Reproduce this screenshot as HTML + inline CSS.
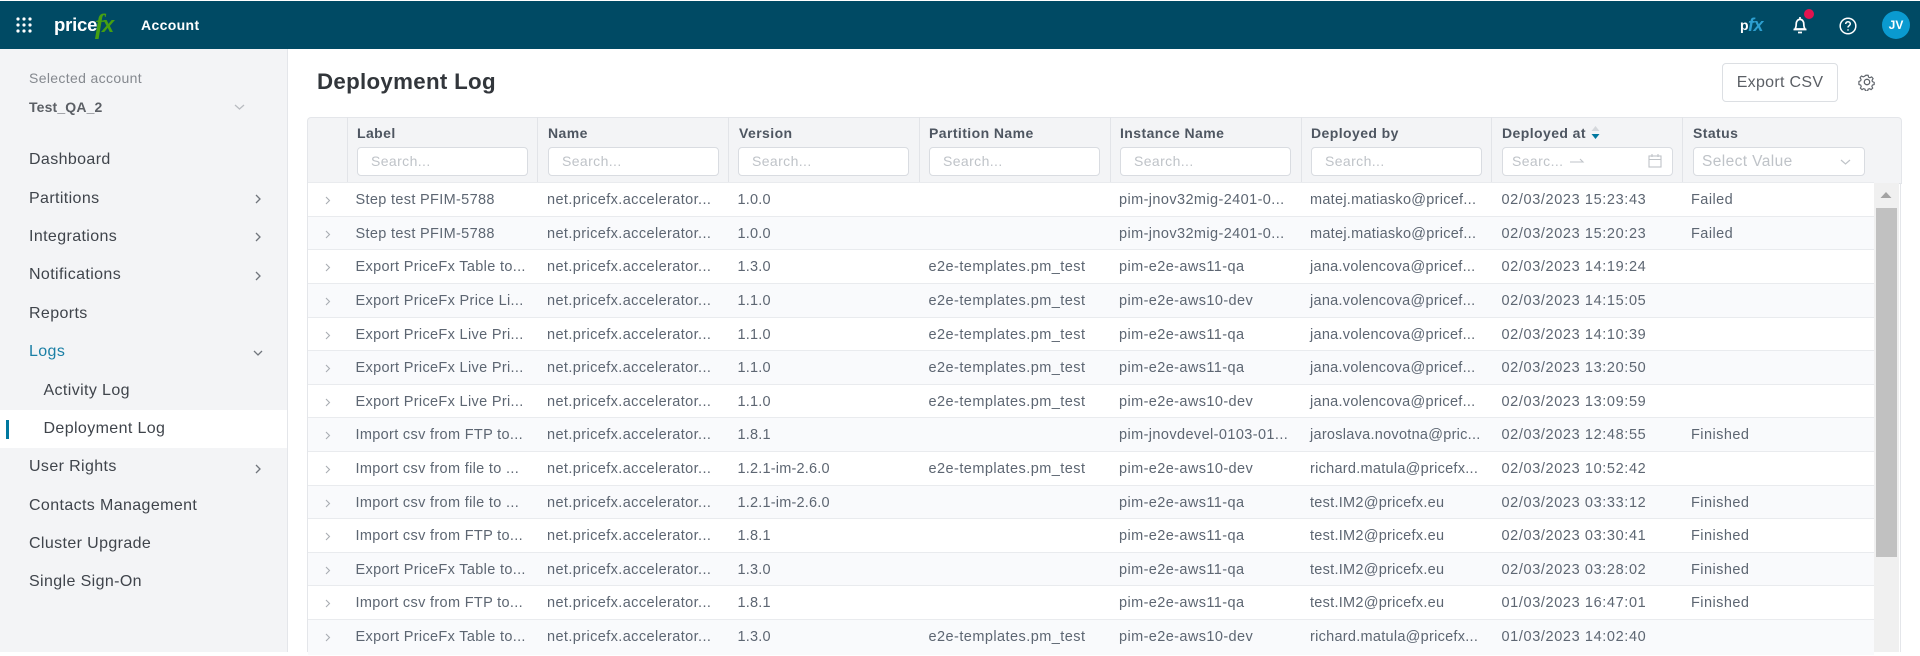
<!DOCTYPE html>
<html><head><meta charset="utf-8"><style>
html,body{margin:0;padding:0;width:1920px;height:652px;overflow:hidden;background:#fff;font-family:"Liberation Sans",sans-serif}
div,span,svg{position:absolute}
span{white-space:nowrap}
#top{left:0;top:1px;width:1920px;height:48px;background:#004a64}
#side{left:0;top:49px;width:287px;height:603px;background:#f3f4f6;border-right:1px solid #e4e6ea}
.n{left:29px;font-size:16px;letter-spacing:.38px;color:#3f444b;line-height:20px}
.s{left:43.500px}
.ch{left:253px;width:10px;height:10px}
.hd{left:307px;top:117px;width:1593px;height:65px;background:#f3f4f6;border:1px solid #e4e6ea;border-bottom:1px solid #dfe2e6;box-sizing:content-box;border-radius:4px 4px 0 0}
.v{top:117px;width:1px;height:65px;background:#e2e4e8}
.hl{top:124px;font-size:14px;font-weight:bold;letter-spacing:.42px;color:#4e5661;line-height:18px}
.in{top:147px;height:27px;background:#fff;border:1px solid #d9dce1;border-radius:4px;width:169px;color:#bfc3c8;font-size:14px;letter-spacing:.4px;line-height:27px;text-indent:13px}
.r{left:308px;width:1566px;height:36px;box-sizing:border-box;border-top:1px solid #e9ebee;background:#fff;color:#5d6672;font-size:14.500px;letter-spacing:.45px;line-height:35.500px}
.r.e{background:#f9fafc}
.r span{top:0}
.a{left:47.500px;letter-spacing:.33px}.b{left:239px;letter-spacing:.4px}.c{left:429.500px;letter-spacing:.2px}.d{left:620.500px}.f{left:811px;letter-spacing:.4px}.g{left:1002px;letter-spacing:.27px}.h{left:1193.500px;letter-spacing:.62px}.j{left:1383px}
.r svg{left:16px;top:13px;width:8px;height:9px}
</style></head><body>
<div id="top"></div>
<svg style="left:16px;top:17px" width="16" height="16" viewBox="0 0 16 16" fill="#fff"><circle cx="2" cy="2" r="1.600"/><circle cx="8" cy="2" r="1.600"/><circle cx="14" cy="2" r="1.600"/><circle cx="2" cy="8" r="1.600"/><circle cx="8" cy="8" r="1.600"/><circle cx="14" cy="8" r="1.600"/><circle cx="2" cy="14" r="1.600"/><circle cx="8" cy="14" r="1.600"/><circle cx="14" cy="14" r="1.600"/></svg>
<span style="left:54px;top:13px;font-size:18.500px;font-weight:bold;color:#fff;line-height:24px;letter-spacing:-.2px">price</span>
<span style="left:95px;top:10px;font-family:'Liberation Serif',serif;font-size:27px;font-weight:bold;font-style:italic;color:#46a012;line-height:28px">f</span>
<span style="left:102px;top:13px;font-size:22px;font-weight:bold;font-style:italic;color:#46a012;line-height:24px">x</span>
<span style="left:141px;top:16px;font-size:14px;font-weight:bold;color:#fff;line-height:18px;letter-spacing:.35px">Account</span>
<span style="left:1740px;top:16px;font-size:14px;font-weight:bold;color:#fff;line-height:18px">p</span>
<span style="left:1748px;top:13px;font-size:18px;font-weight:bold;font-style:italic;color:#2d9fd0;line-height:24px;letter-spacing:-.5px">fx</span>
<svg style="left:1792px;top:16px" width="16" height="18" viewBox="0 0 16 18" fill="none" stroke="#fff" stroke-width="1.700"><path d="M3 13c.9-1.300 1.200-2.300 1.200-5 0-2.700 1.600-4.600 3.800-4.600s3.800 1.900 3.800 4.600c0 2.700.3 3.700 1.200 5z" stroke-linejoin="round"/><path d="M1.500 13.500h13M6 16.500h4M8 1v2.500"/></svg>
<div style="left:1804px;top:9px;width:10px;height:10px;border-radius:50%;background:#e2134f"></div>
<svg style="left:1839px;top:17px" width="18" height="18" viewBox="0 0 18 18" fill="none" stroke="#fff" stroke-width="1.500"><circle cx="9" cy="9" r="7.800"/><path d="M6.700 7c0-1.400 1-2.300 2.300-2.300s2.300.9 2.300 2.200c0 1.800-2.300 1.800-2.300 3.600"/><path d="M9 12.300v1.300"/></svg>
<div style="left:1882px;top:11px;width:28px;height:28px;border-radius:50%;background:#0a9ad0;color:#fff;font-size:12px;font-weight:bold;line-height:28px;text-align:center">JV</div>

<div id="side"></div>
<span style="left:29px;top:69px;font-size:14px;letter-spacing:.35px;color:#85898f;line-height:18px">Selected account</span>
<span style="left:29px;top:98px;font-size:14px;font-weight:bold;letter-spacing:.15px;color:#5b5f65;line-height:18px">Test_QA_2</span>
<svg style="left:234px;top:103px" width="11" height="8" viewBox="0 0 11 8" fill="none" stroke="#b9bcc1" stroke-width="1.300"><path d="M1 2l4.500 4L10 2"/></svg>
<span class="n" style="top:150px">Dashboard</span>
<span class="n" style="top:189px">Partitions</span>
<span class="n" style="top:227px">Integrations</span>
<span class="n" style="top:265px">Notifications</span>
<span class="n" style="top:304px">Reports</span>
<span class="n" style="top:342px;color:#1a7fa5">Logs</span>
<span class="n s" style="top:381px">Activity Log</span>
<div style="left:0;top:410px;width:287px;height:38px;background:#fff"></div>
<div style="left:6px;top:420px;width:3px;height:19px;background:#00789f"></div>
<span class="n s" style="top:419px">Deployment Log</span>
<span class="n" style="top:457px">User Rights</span>
<span class="n" style="top:496px">Contacts Management</span>
<span class="n" style="top:534px">Cluster Upgrade</span>
<span class="n" style="top:572px">Single Sign-On</span>
<svg class="ch" style="top:194px" viewBox="0 0 10 10" fill="none" stroke="#70757c" stroke-width="1.300"><path d="M3 1l4 4-4 4"/></svg>
<svg class="ch" style="top:232px" viewBox="0 0 10 10" fill="none" stroke="#70757c" stroke-width="1.300"><path d="M3 1l4 4-4 4"/></svg>
<svg class="ch" style="top:271px" viewBox="0 0 10 10" fill="none" stroke="#70757c" stroke-width="1.300"><path d="M3 1l4 4-4 4"/></svg>
<svg class="ch" style="top:348px" viewBox="0 0 10 10" fill="none" stroke="#70757c" stroke-width="1.300"><path d="M1 3l4 4 4-4"/></svg>
<svg class="ch" style="top:464px" viewBox="0 0 10 10" fill="none" stroke="#70757c" stroke-width="1.300"><path d="M3 1l4 4-4 4"/></svg>

<span style="left:317px;top:67px;font-size:22.300px;font-weight:bold;color:#32363b;line-height:30px;letter-spacing:.3px">Deployment Log</span>
<div style="left:1722px;top:63px;width:114px;height:37px;border:1px solid #dcdfe3;border-radius:4px;background:#fff;color:#5b5f65;font-size:16px;line-height:37px;text-align:center;letter-spacing:.3px">Export CSV</div>
<svg style="left:1858px;top:73px" width="18" height="18" viewBox="0 0 18 18" fill="none" stroke="#5f646b" stroke-width="1.300"><circle cx="9" cy="9" r="2.700"/><path d="M7.700 1.500h2.600l.4 2.100 1.500.7 1.900-1 1.700 2-1.200 1.700.4 1.600 2 .8v2.400l-2 .6-.6 1.600 1 1.800-1.900 1.700-1.700-1.100-1.600.6-.5 2h-2.400l-.5-2-1.600-.6-1.700 1.100-1.900-1.700 1-1.800-.6-1.600-2-.6V8.400l2-.8.4-1.600-1.200-1.700 1.700-2 1.900 1 1.500-.7z" transform="translate(.9 .9) scale(.9)" stroke-linejoin="round"/></svg>

<div class="hd"></div>
<div class="v" style="left:347px"></div><div class="v" style="left:537px"></div><div class="v" style="left:728px"></div><div class="v" style="left:919px"></div><div class="v" style="left:1110px"></div><div class="v" style="left:1301px"></div><div class="v" style="left:1491px"></div><div class="v" style="left:1682px"></div>
<span class="hl" style="left:357px">Label</span><span class="hl" style="left:548px">Name</span><span class="hl" style="left:739px">Version</span><span class="hl" style="left:929px">Partition Name</span><span class="hl" style="left:1120px">Instance Name</span><span class="hl" style="left:1311px">Deployed by</span><span class="hl" style="left:1502px">Deployed at</span><span class="hl" style="left:1693px">Status</span>
<svg style="left:1591px;top:125px" width="9" height="16" viewBox="0 0 9 16"><path d="M4.500 1L8.500 6H.5z" fill="#d5d8dc"/><path d="M4.500 14L8.500 9H.5z" fill="#00789f"/></svg>
<div class="in" style="left:357px">Search...</div><div class="in" style="left:548px">Search...</div><div class="in" style="left:738px">Search...</div><div class="in" style="left:929px">Search...</div><div class="in" style="left:1120px">Search...</div><div class="in" style="left:1311px">Search...</div>
<div class="in" style="left:1502px;text-indent:9px">Searc...</div>
<svg style="left:1570px;top:156px" width="15" height="10" viewBox="0 0 15 10" fill="none" stroke="#bfc3c8" stroke-width="1.100"><path d="M0 6h13l-3-3"/></svg>
<svg style="left:1648px;top:154px" width="14" height="14" viewBox="0 0 14 14" fill="none" stroke="#bfc3c8" stroke-width="1.100"><rect x="1" y="2" width="12" height="11"/><path d="M1 5.500h12M4 0v3M10 0v3"/></svg>
<div class="in" style="left:1693px;width:170px;text-indent:8px;font-size:15.500px">Select Value</div>
<svg style="left:1840px;top:158px" width="11" height="8" viewBox="0 0 11 8" fill="none" stroke="#bfc3c8" stroke-width="1.200"><path d="M1 2l4.500 4L10 2"/></svg>

<div class="r" style="top:182px"><svg viewBox="0 0 8 9" fill="none" stroke="#a9adb3" stroke-width="1.100"><path d="M2 1l3.500 3.500L2 8"/></svg><span class="a">Step test PFIM-5788</span><span class="b">net.pricefx.accelerator...</span><span class="c">1.0.0</span><span class="f">pim-jnov32mig-2401-0...</span><span class="g">matej.matiasko@pricef...</span><span class="h">02/03/2023 15:23:43</span><span class="j">Failed</span></div>
<div class="r e" style="top:216px"><svg viewBox="0 0 8 9" fill="none" stroke="#a9adb3" stroke-width="1.100"><path d="M2 1l3.500 3.500L2 8"/></svg><span class="a">Step test PFIM-5788</span><span class="b">net.pricefx.accelerator...</span><span class="c">1.0.0</span><span class="f">pim-jnov32mig-2401-0...</span><span class="g">matej.matiasko@pricef...</span><span class="h">02/03/2023 15:20:23</span><span class="j">Failed</span></div>
<div class="r" style="top:249px"><svg viewBox="0 0 8 9" fill="none" stroke="#a9adb3" stroke-width="1.100"><path d="M2 1l3.500 3.500L2 8"/></svg><span class="a">Export PriceFx Table to...</span><span class="b">net.pricefx.accelerator...</span><span class="c">1.3.0</span><span class="d">e2e-templates.pm_test</span><span class="f">pim-e2e-aws11-qa</span><span class="g">jana.volencova@pricef...</span><span class="h">02/03/2023 14:19:24</span></div>
<div class="r e" style="top:283px"><svg viewBox="0 0 8 9" fill="none" stroke="#a9adb3" stroke-width="1.100"><path d="M2 1l3.500 3.500L2 8"/></svg><span class="a">Export PriceFx Price Li...</span><span class="b">net.pricefx.accelerator...</span><span class="c">1.1.0</span><span class="d">e2e-templates.pm_test</span><span class="f">pim-e2e-aws10-dev</span><span class="g">jana.volencova@pricef...</span><span class="h">02/03/2023 14:15:05</span></div>
<div class="r" style="top:317px"><svg viewBox="0 0 8 9" fill="none" stroke="#a9adb3" stroke-width="1.100"><path d="M2 1l3.500 3.500L2 8"/></svg><span class="a">Export PriceFx Live Pri...</span><span class="b">net.pricefx.accelerator...</span><span class="c">1.1.0</span><span class="d">e2e-templates.pm_test</span><span class="f">pim-e2e-aws11-qa</span><span class="g">jana.volencova@pricef...</span><span class="h">02/03/2023 14:10:39</span></div>
<div class="r e" style="top:350px"><svg viewBox="0 0 8 9" fill="none" stroke="#a9adb3" stroke-width="1.100"><path d="M2 1l3.500 3.500L2 8"/></svg><span class="a">Export PriceFx Live Pri...</span><span class="b">net.pricefx.accelerator...</span><span class="c">1.1.0</span><span class="d">e2e-templates.pm_test</span><span class="f">pim-e2e-aws11-qa</span><span class="g">jana.volencova@pricef...</span><span class="h">02/03/2023 13:20:50</span></div>
<div class="r" style="top:384px"><svg viewBox="0 0 8 9" fill="none" stroke="#a9adb3" stroke-width="1.100"><path d="M2 1l3.500 3.500L2 8"/></svg><span class="a">Export PriceFx Live Pri...</span><span class="b">net.pricefx.accelerator...</span><span class="c">1.1.0</span><span class="d">e2e-templates.pm_test</span><span class="f">pim-e2e-aws10-dev</span><span class="g">jana.volencova@pricef...</span><span class="h">02/03/2023 13:09:59</span></div>
<div class="r e" style="top:417px"><svg viewBox="0 0 8 9" fill="none" stroke="#a9adb3" stroke-width="1.100"><path d="M2 1l3.500 3.500L2 8"/></svg><span class="a">Import csv from FTP to...</span><span class="b">net.pricefx.accelerator...</span><span class="c">1.8.1</span><span class="f">pim-jnovdevel-0103-01...</span><span class="g">jaroslava.novotna@pric...</span><span class="h">02/03/2023 12:48:55</span><span class="j">Finished</span></div>
<div class="r" style="top:451px"><svg viewBox="0 0 8 9" fill="none" stroke="#a9adb3" stroke-width="1.100"><path d="M2 1l3.500 3.500L2 8"/></svg><span class="a">Import csv from file to ...</span><span class="b">net.pricefx.accelerator...</span><span class="c">1.2.1-im-2.6.0</span><span class="d">e2e-templates.pm_test</span><span class="f">pim-e2e-aws10-dev</span><span class="g">richard.matula@pricefx...</span><span class="h">02/03/2023 10:52:42</span></div>
<div class="r e" style="top:485px"><svg viewBox="0 0 8 9" fill="none" stroke="#a9adb3" stroke-width="1.100"><path d="M2 1l3.500 3.500L2 8"/></svg><span class="a">Import csv from file to ...</span><span class="b">net.pricefx.accelerator...</span><span class="c">1.2.1-im-2.6.0</span><span class="f">pim-e2e-aws11-qa</span><span class="g">test.IM2@pricefx.eu</span><span class="h">02/03/2023 03:33:12</span><span class="j">Finished</span></div>
<div class="r" style="top:518px"><svg viewBox="0 0 8 9" fill="none" stroke="#a9adb3" stroke-width="1.100"><path d="M2 1l3.500 3.500L2 8"/></svg><span class="a">Import csv from FTP to...</span><span class="b">net.pricefx.accelerator...</span><span class="c">1.8.1</span><span class="f">pim-e2e-aws11-qa</span><span class="g">test.IM2@pricefx.eu</span><span class="h">02/03/2023 03:30:41</span><span class="j">Finished</span></div>
<div class="r e" style="top:552px"><svg viewBox="0 0 8 9" fill="none" stroke="#a9adb3" stroke-width="1.100"><path d="M2 1l3.500 3.500L2 8"/></svg><span class="a">Export PriceFx Table to...</span><span class="b">net.pricefx.accelerator...</span><span class="c">1.3.0</span><span class="f">pim-e2e-aws11-qa</span><span class="g">test.IM2@pricefx.eu</span><span class="h">02/03/2023 03:28:02</span><span class="j">Finished</span></div>
<div class="r" style="top:585px"><svg viewBox="0 0 8 9" fill="none" stroke="#a9adb3" stroke-width="1.100"><path d="M2 1l3.500 3.500L2 8"/></svg><span class="a">Import csv from FTP to...</span><span class="b">net.pricefx.accelerator...</span><span class="c">1.8.1</span><span class="f">pim-e2e-aws11-qa</span><span class="g">test.IM2@pricefx.eu</span><span class="h">01/03/2023 16:47:01</span><span class="j">Finished</span></div>
<div class="r e" style="top:619px"><svg viewBox="0 0 8 9" fill="none" stroke="#a9adb3" stroke-width="1.100"><path d="M2 1l3.500 3.500L2 8"/></svg><span class="a">Export PriceFx Table to...</span><span class="b">net.pricefx.accelerator...</span><span class="c">1.3.0</span><span class="d">e2e-templates.pm_test</span><span class="f">pim-e2e-aws10-dev</span><span class="g">richard.matula@pricefx...</span><span class="h">01/03/2023 14:02:40</span></div>

<div style="left:1874px;top:183px;width:25px;height:469px;background:#f0f0f0"></div>
<div style="left:1876px;top:208px;width:21px;height:349px;background:#c1c1c1"></div>
<svg style="left:1880px;top:191px" width="12" height="8" viewBox="0 0 12 8"><path d="M6 1l5.500 6H.5z" fill="#a3a3a3"/></svg>
<div style="left:307px;top:183px;width:1px;height:469px;background:#e4e6ea"></div>
<div style="left:1900px;top:183px;width:1px;height:469px;background:#e4e6ea"></div>
</body></html>
